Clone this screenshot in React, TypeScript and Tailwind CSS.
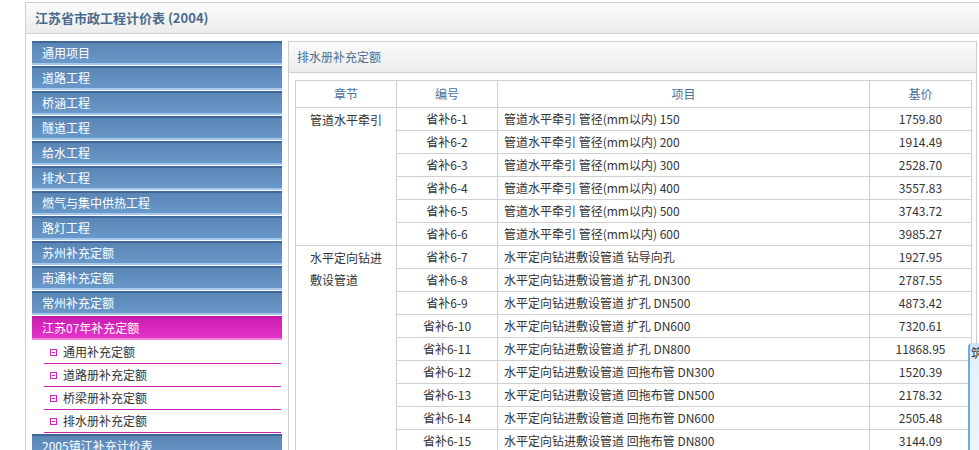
import React from 'react';

const font = { fontFamily: '"Noto Sans CJK SC", "Liberation Sans", sans-serif' };

const menuItems = [
  '通用项目',
  '道路工程',
  '桥涵工程',
  '隧道工程',
  '给水工程',
  '排水工程',
  '燃气与集中供热工程',
  '路灯工程',
  '苏州补充定额',
  '南通补充定额',
  '常州补充定额',
];

const subItems = ['通用补充定额', '道路册补充定额', '桥梁册补充定额', '排水册补充定额'];

// rows of the price table
const rows = [
  { code: '省补6-1', name: '管道水平牵引 管径(mm以内) 150', price: '1759.80' },
  { code: '省补6-2', name: '管道水平牵引 管径(mm以内) 200', price: '1914.49' },
  { code: '省补6-3', name: '管道水平牵引 管径(mm以内) 300', price: '2528.70' },
  { code: '省补6-4', name: '管道水平牵引 管径(mm以内) 400', price: '3557.83' },
  { code: '省补6-5', name: '管道水平牵引 管径(mm以内) 500', price: '3743.72' },
  { code: '省补6-6', name: '管道水平牵引 管径(mm以内) 600', price: '3985.27' },
  { code: '省补6-7', name: '水平定向钻进敷设管道 钻导向孔', price: '1927.95' },
  { code: '省补6-8', name: '水平定向钻进敷设管道 扩孔 DN300', price: '2787.55' },
  { code: '省补6-9', name: '水平定向钻进敷设管道 扩孔 DN500', price: '4873.42' },
  { code: '省补6-10', name: '水平定向钻进敷设管道 扩孔 DN600', price: '7320.61' },
  { code: '省补6-11', name: '水平定向钻进敷设管道 扩孔 DN800', price: '11868.95' },
  { code: '省补6-12', name: '水平定向钻进敷设管道 回拖布管 DN300', price: '1520.39' },
  { code: '省补6-13', name: '水平定向钻进敷设管道 回拖布管 DN500', price: '2178.32' },
  { code: '省补6-14', name: '水平定向钻进敷设管道 回拖布管 DN600', price: '2505.48' },
  { code: '省补6-15', name: '水平定向钻进敷设管道 回拖布管 DN800', price: '3144.09' },
];

const MenuItem = ({ label }: { label: string }) => (
  <div className="mb-px flex h-[24px] items-center border-t-2 border-b-2 border-t-[#3f6697] border-b-[#a3c8ec] bg-gradient-to-b from-[#5a86b5] to-[#6898c9] pl-[10px] text-[12px] text-white">
    {label}
  </div>
);

const App: React.FC = () => {
  return (
    <div className="relative h-[450px] w-full overflow-hidden bg-white text-[12px] text-[#333]" style={font}>
      <div className="ml-[25px] mt-[2px] w-[960px] border border-[#cfcfcf]">
        {/* Title bar */}
        <div className="flex h-[31px] items-center border-b border-[#cfcfcf] bg-gradient-to-b from-[#fbfbfb] to-[#ececec] pl-[9px] text-[13px] font-bold text-[#4a6a8c]">
          江苏省市政工程计价表 (2004)
        </div>

        <div className="flex items-start gap-[6px] px-[6px] pt-[7px]">
          {/* Sidebar */}
          <div className="w-[250px] shrink-0">
            {menuItems.map((m) => (
              <MenuItem key={m} label={m} />
            ))}
            <div className="mb-px flex h-[24px] items-center border-t-2 border-b-2 border-t-[#c11aa8] border-b-[#ee86df] bg-gradient-to-b from-[#cc1db3] to-[#e233ca] pl-[10px] text-white">
              江苏07年补充定额
            </div>
            <div className="mb-px ml-[12px] mr-px">
              {subItems.map((s) => (
                <div key={s} className="flex h-[23px] items-center border-b border-[#cc22b8] pl-[6px] text-[#333]">
                  <span className="mr-[6px] flex h-[7px] w-[7px] items-center justify-center border border-[#cc22b8]">
                    <span className="h-px w-[3px] bg-[#cc22b8]" />
                  </span>
                  {s}
                </div>
              ))}
            </div>
            <MenuItem label="2005镇江补充计价表" />
          </div>

          {/* Right panel */}
          <div className="w-[689px] shrink-0 border border-[#cfcfcf]">
            <div className="flex h-[31px] items-center border-b border-[#cfcfcf] bg-gradient-to-b from-[#fbfbfb] to-[#ececec] pl-[8px] text-[#4d6f94]">
              排水册补充定额
            </div>
            <div className="pl-[6px] pr-[5px] pt-[7px]">
              <table className="w-[676px] table-fixed border-collapse border border-[#d0d0d0]">
                <colgroup>
                  <col className="w-[101px]" />
                  <col className="w-[101px]" />
                  <col className="w-[372px]" />
                  <col className="w-[102px]" />
                </colgroup>
                <thead>
                  <tr className="h-[27px] text-[#4a7099]">
                    <th className="border border-[#d0d0d0] font-normal">章节</th>
                    <th className="border border-[#d0d0d0] font-normal">编号</th>
                    <th className="border border-[#d0d0d0] font-normal">项目</th>
                    <th className="border border-[#d0d0d0] font-normal">基价</th>
                  </tr>
                </thead>
                <tbody>
                  {rows.map((r, i) => (
                    <tr key={r.code} className="h-[23px]">
                      {i === 0 && (
                        <td rowSpan={6} className="border border-[#d0d0d0] px-[14px] pt-px align-top leading-[22px]">
                          管道水平牵引
                        </td>
                      )}
                      {i === 6 && (
                        <td rowSpan={9} className="border border-[#d0d0d0] px-[14px] pt-px align-top leading-[22px]">
                          水平定向钻进敷设管道
                        </td>
                      )}
                      <td className="border border-[#d0d0d0] text-center">{r.code}</td>
                      <td className="border border-[#d0d0d0] pl-[6px] whitespace-nowrap">{r.name}</td>
                      <td className="border border-[#d0d0d0] text-center">{r.price}</td>
                    </tr>
                  ))}
                </tbody>
              </table>
            </div>
          </div>
        </div>
      </div>

      {/* floating side widget, mostly off screen */}
      <div className="absolute left-[968px] top-[343px] h-[140px] w-[80px] rounded-tl-[4px] border-l-2 border-[#6fabe3] bg-gradient-to-b from-[#e3f0fb] to-[#eef6fd]">
        <div className="h-[20px] bg-gradient-to-b from-[#c7e0f6] to-[#e8f3fc] pl-px pt-[3px] text-[12px] leading-[14px] text-[#333]">
          筑龙网
        </div>
      </div>
    </div>
  );
};

export default App;
